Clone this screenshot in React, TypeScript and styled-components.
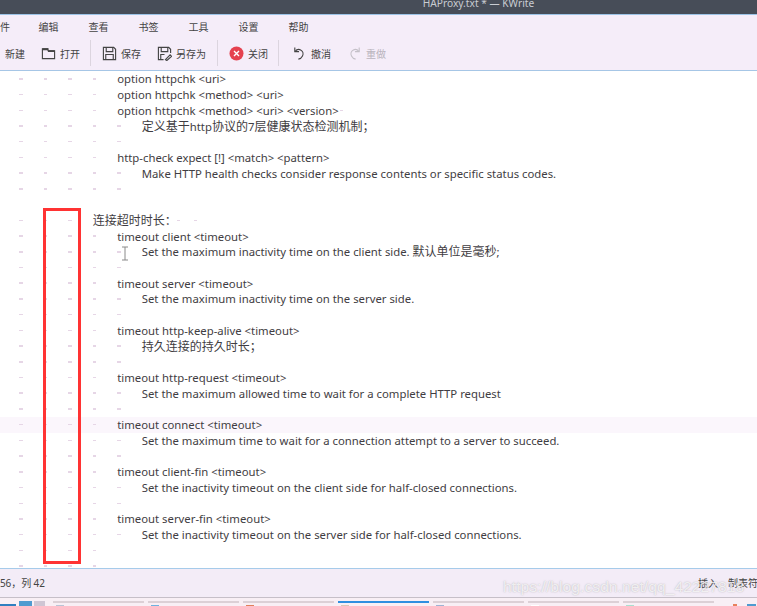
import React from 'react';
import styled, { createGlobalStyle } from 'styled-components';

const Global = createGlobalStyle`
  html, body { margin: 0; padding: 0; background: #fff; }
  body { width: 757px; height: 606px; overflow: hidden; font-family: "Noto Sans", "Noto Sans CJK SC", sans-serif; }
`;
const Window = styled.div`
  position: relative; width: 757px; height: 606px; display: flex; flex-direction: column; overflow: hidden;
`;
const TitleBar = styled.div`
  height: 14px; flex: none; background: #474d58; color: #c9ccd2; font-size: 10.2px; line-height: 7px;
  display: flex; justify-content: center; overflow: hidden; border-bottom: 1px solid #9cc3e6; padding-left: 200px;
`;
const MenuBar = styled.div`
  height: 23px; padding-bottom: 2px; flex: none; background: #f5edf9; display: flex; align-items: center; color: #444;
  font-size: 10px;
`;
const MenuItem = styled.span`
  width: 50px; flex: none; text-align: center;
`;
const MenuCut = styled.span`
  width: 23.5px; flex: none;
`;
const ToolBar = styled.div`
  height: 26px; padding-bottom: 4px; flex: none; background: #f5edf9; display: flex; align-items: center; color: #444; font-size: 10px;
  border-bottom: 1.5px solid #a6c6e6;
`;
const ToolButton = styled.div<{ $w: number; $pl: number; $off?: boolean }>`
  width: ${p => p.$w}px; padding-left: ${p => p.$pl}px; box-sizing: border-box; flex: none; display: flex; align-items: center; gap: 4px;
  color: ${p => (p.$off ? '#b9b4bd' : '#444')};
`;
const Sep = styled.div`
  width: 1px; height: 26px; background: #dcd5df; flex: none; margin: 0 4px;
`;
const Editor = styled.div`
  flex: 1; min-height: 0; background: #fff; overflow: hidden;
`;
const Row = styled.div<{ $current?: boolean }>`
  height: 15.72px; display: flex; align-items: center; white-space: pre; color: #3f3d42; font-size: 11.33px; padding-left: 19px;
  background: ${p => (p.$current ? '#fbf6fc' : 'transparent')};
`;
const LineText = styled.span`
  line-height: 15px;
`;
const Cjk = styled.span`
  font-size: 12px; line-height: 1;
`;
const Tab = styled.span`
  width: 24.55px; flex: none; display: flex; align-items: center;
  &::before { content: ""; width: 3.5px; height: 1.5px; background: #e6d6e6; }
`;
const Trail = styled.span<{ $gap: number }>`
  width: 3.5px; height: 1.5px; background: #e6d6e6; flex: none; margin-left: ${p => p.$gap}px;
`;
const StatusBar = styled.div`
  height: 26px; padding-bottom: 2px; flex: none; background: #f3ecf7; border-top: 1px solid #a6cbea; display: flex; align-items: center;
  justify-content: space-between; font-size: 10px; color: #444;
`;
const StatusText = styled.span`
  letter-spacing: -.1px;
`;
const StatusRight = styled.div`
  display: flex; gap: 10px; margin-right: -1px;
`;
const TaskBar = styled.div`
  height: 9px; box-sizing: border-box; flex: none; background: #f8eff5; border-top: 1px solid #c6bfc8; display: flex; align-items: flex-start; padding-top: 2.5px;
`;
const Launcher = styled.div<{ $c: string; $w: number; $ml?: number; $mt?: number }>`
  width: ${p => p.$w}px; height: 6px; background: ${p => p.$c}; flex: none; margin-left: ${p => p.$ml ?? 0}px; margin-top: ${p => p.$mt ?? 0}px;
`;
const Task = styled.div<{ $active?: boolean; $first?: boolean }>`
  width: 91px; margin-left: ${p => (p.$first ? 8 : 4)}px; flex: none; height: 7px; border-top: 2px solid ${p => (p.$active ? '#2f8fe0' : '#dcd0d6')};
  display: flex; padding: 2px 3px 0; box-sizing: border-box;
`;
const TaskIcon = styled.span<{ $c: string }>`
  width: 8px; height: 4px; background: ${p => p.$c}; flex: none;
`;
const TrayDot = styled.span<{ $c: string; $ml: number; $w: number }>`
  width: ${p => p.$w}px; height: 4px; margin-top: 3px; margin-left: ${p => p.$ml}px; background: ${p => p.$c}; flex: none;
`;
const Marked = styled.div`
  position: absolute; left: 43px; top: 208px; width: 38px; height: 356px; box-sizing: border-box; border: 3px solid #ff3333; pointer-events: none;
`;
const Watermark = styled.div`
  position: absolute; left: 503px; top: 578px; font-family: "Liberation Sans", sans-serif; font-size: 15.5px; color: rgba(255,255,255,.75);
  text-shadow: 0 0 1.5px rgba(130,130,130,.6); white-space: nowrap; letter-spacing: .1px;
`;
const Cursor = styled.svg`
  position: absolute; left: 121px; top: 246px;
`;

const I = { width: 15, height: 15, viewBox: '0 0 16 16', fill: 'none', stroke: '#444', strokeWidth: 1.2 };

const lines: [number, string, number?][] = [
  [4, 'option httpchk <uri>'],
  [4, 'option httpchk <method> <uri>'],
  [4, 'option httpchk <method> <uri> <version>', 3],
  [5, '定义基于http协议的7层健康状态检测机制；'],
  [5, ''],
  [4, 'http-check expect [!] <match> <pattern>'],
  [5, 'Make HTTP health checks consider response contents or specific status codes.'],
  [5, ''],
  [0, ''],
  [3, '连接超时时长：', 5],
  [4, 'timeout client <timeout>'],
  [5, 'Set the maximum inactivity time on the client side. 默认单位是毫秒;'],
  [5, ''],
  [4, 'timeout server <timeout>'],
  [5, 'Set the maximum inactivity time on the server side.'],
  [5, ''],
  [4, 'timeout http-keep-alive <timeout>'],
  [5, '持久连接的持久时长；'],
  [5, ''],
  [4, 'timeout http-request <timeout>'],
  [5, 'Set the maximum allowed time to wait for a complete HTTP request'],
  [5, ''],
  [4, 'timeout connect <timeout>'],
  [5, 'Set the maximum time to wait for a connection attempt to a server to succeed.'],
  [5, ''],
  [4, 'timeout client-fin <timeout>'],
  [5, 'Set the inactivity timeout on the client side for half-closed connections.'],
  [5, ''],
  [4, 'timeout server-fin <timeout>'],
  [5, 'Set the inactivity timeout on the server side for half-closed connections.'],
  [4, ''],
  [4, ''],
];

function Mixed({ text }: { text: string }) {
  const parts = text.split(/([\u3000-\u9fff\uff00-\uffef]+)/);
  return (
    <LineText>
      {parts.map((part, i) => (i % 2 ? <Cjk key={i}>{part}</Cjk> : part))}
    </LineText>
  );
}

export default function App() {
  return (
    <Window>
      <Global />
      <TitleBar>HAProxy.txt * — KWrite</TitleBar>
      <MenuBar>
        <MenuCut>件</MenuCut>
        <MenuItem>编辑</MenuItem>
        <MenuItem>查看</MenuItem>
        <MenuItem>书签</MenuItem>
        <MenuItem>工具</MenuItem>
        <MenuItem>设置</MenuItem>
        <MenuItem>帮助</MenuItem>
      </MenuBar>
      <ToolBar>
        <ToolButton $w={36} $pl={5}>新建</ToolButton>
        <ToolButton $w={50} $pl={5}>
          <svg {...I}><path d="M1.500 3h6v2h7v8.500h-13z" /><path d="M1.500 3.400h6M7.500 5.400h7" strokeWidth="2" /></svg>
          打开
        </ToolButton>
        <Sep />
        <ToolButton $w={56} $pl={7}>
          <svg {...I}><path d="M1.500 1.500h11l2 2v11h-13z" /><path d="M4.500 1.500v4.500h7V1.500M4 14.500V9h8v5.500" /></svg>
          保存
        </ToolButton>
        <ToolButton $w={62} $pl={6}>
          <svg {...I}><path d="M7 14.500H1.500v-13h11l2 2v4" /><path d="M4.500 1.500v4.500h7V1.500M4 14.500V9h4" /><path d="M9 14.500l5-5 1.500 1.500-5 4.500z" /></svg>
          另存为
        </ToolButton>
        <Sep />
        <ToolButton $w={52} $pl={7}>
          <svg width="15" height="15" viewBox="0 0 15 15"><circle cx="7.500" cy="7.500" r="7" fill="#e5414f" /><path d="M5 5l5 5M10 5l-5 5" stroke="#fff" strokeWidth="1.400" /></svg>
          关闭
        </ToolButton>
        <Sep />
        <ToolButton $w={55} $pl={9}>
          <svg {...I}><path d="M3 1.500v4.500h4.500" /><path d="M3.200 6c1.500-2 4-2.800 6-1.800 2.400 1.200 3.200 4 2 6.500-.8 1.700-2.400 3-4.400 3.300" /></svg>
          撤消
        </ToolButton>
        <ToolButton $w={50} $pl={9} $off>
          <svg {...I} stroke="#c4c0c8"><path d="M13 1.500v4.500H8.500" /><path d="M12.800 6c-1.500-2-4-2.800-6-1.800-2.400 1.200-3.200 4-2 6.500.8 1.700 2.400 3 4.400 3.300" /></svg>
          重做
        </ToolButton>
      </ToolBar>
      <Editor>
        {lines.map(([tabs, text, trail], i) => (
          <Row key={i} $current={i === 22}>
            {Array.from({ length: tabs }, (_, t) => <Tab key={t} />)}
            <Mixed text={text} />
            {trail === 3 && <Trail $gap={1} />}
            {trail === 5 && (
              <>
                <Trail $gap={0} />
                <Trail $gap={13.5} />
              </>
            )}
          </Row>
        ))}
      </Editor>
      <StatusBar>
        <StatusText>56，列 42</StatusText>
        <StatusRight>
          <span>插入</span>
          <span>制表符</span>
        </StatusRight>
      </StatusBar>
      <TaskBar>
        <Launcher $c="#2f7fc0" $w={16} $mt={3} />
        <Launcher $c="#4f9bd0" $w={13} $ml={3} />
        <Launcher $c="#cfc6d4" $w={11} $ml={2} />
        <Task $first><TaskIcon $c="#b9c5d6" /></Task>
        <Task><TaskIcon $c="#6fb2e0" /></Task>
        <Task><TaskIcon $c="#e0805c" /></Task>
        <Task $active><TaskIcon $c="#d8c8b8" /></Task>
        <Task><TaskIcon $c="#9db4d4" /></Task>
        <Task><TaskIcon $c="#fff" /></Task>
        <Task><TaskIcon $c="#a8e0d0" /></Task>
        <TrayDot $c="#e8805c" $ml={19} $w={4} />
        <TrayDot $c="#4f9bd0" $ml={10} $w={9} />
      </TaskBar>
      <Marked />
      <Cursor width="8" height="16" viewBox="0 0 8 16" fill="none" stroke="#8a8a8a" strokeWidth="1">
        <path d="M1 1h6M4 1v13M1 14h6" />
      </Cursor>
      <Watermark>https://blog.csdn.net/qq_42227818</Watermark>
    </Window>
  );
}
